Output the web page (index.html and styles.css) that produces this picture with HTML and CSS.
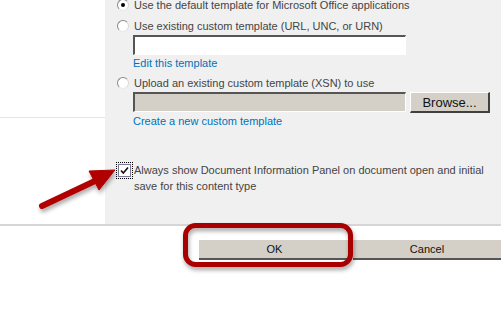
FILE: index.html
```html
<!DOCTYPE html>
<html lang="en">
<head>
    <meta charset="UTF-8">
    <title>Document Information Panel Settings</title>
    <link rel="stylesheet" href="styles.css">
</head>
<body>
    <div class="page">
        <section class="form-section">
            <div class="section-left">
                <div class="section-line"></div>
            </div>
            <div class="section-body">
                <div class="option first">
                    <span class="radio checked"></span>
                    <span>Use the default template for Microsoft Office applications</span>
                </div>
                <div class="option">
                    <span class="radio"></span>
                    <span>Use existing custom template (URL, UNC, or URN)</span>
                </div>
                <div class="field-row">
                    <input type="text" class="text-box">
                </div>
                <a class="link" href="#">Edit this template</a>
                <div class="option">
                    <span class="radio"></span>
                    <span>Upload an existing custom template (XSN) to use</span>
                </div>
                <div class="field-row">
                    <input type="text" class="text-box disabled" disabled>
                    <button class="browse-btn">Browse...</button>
                </div>
                <a class="link" href="#">Create a new custom template</a>

                <div class="check-row">
                    <span class="checkbox">
                        <svg width="11" height="11" viewBox="0 0 11 11">
                            <path d="M2 5.5 L4.3 8 L9 2.5" fill="none" stroke="#111" stroke-width="1.6"/>
                        </svg>
                    </span>
                    <span class="check-label">Always show Document Information Panel on document open and initial save for this content type</span>
                </div>
            </div>
        </section>
        <div class="divider"></div>
        <div class="actions">
            <button class="action-btn ok">OK</button>
            <button class="action-btn cancel">Cancel</button>
        </div>
    </div>

    <!-- annotation overlay -->
    <svg class="annotations" width="501" height="318" viewBox="0 0 501 318">
        <defs>
            <filter id="shadow" x="-20%" y="-20%" width="140%" height="160%">
                <feDropShadow dx="1" dy="3" stdDeviation="2" flood-color="#000" flood-opacity="0.35"/>
            </filter>
        </defs>
        <g filter="url(#shadow)" fill="#b00000" stroke="#b00000">
            <line x1="42" y1="206" x2="96" y2="180.5" stroke-width="6" stroke-linecap="round"/>
            <polygon points="115,170 99,190 89,171" stroke-width="1" stroke-linejoin="round"/>
        </g>
        <rect x="185.5" y="225.5" width="165" height="39" rx="10" ry="10"
              fill="none" stroke="#a80000" stroke-width="5" filter="url(#shadow)"/>
    </svg>
</body>
</html>
```

FILE: styles.css
```css
body {
    margin: 0;
    width: 501px;
    height: 318px;
    overflow: hidden;
    background: #fff;
    font-family: 'Liberation Sans', Arial, sans-serif;
    font-size: 11px;
    color: #444;
    position: relative;
}
.page {
    display: flex;
    flex-direction: column;
}
.form-section {
    display: flex;
    height: 224px;
}
.section-left {
    width: 105px;
    background: #fff;
    padding-top: 117px;
    box-sizing: border-box;
}
.section-line {
    height: 1px;
    background: #e4e4e4;
}
.section-body {
    flex: 1;
    background: #f0f0f0;
    padding-left: 12px;
    overflow: hidden;
}
.option {
    display: flex;
    align-items: center;
    gap: 5px;
    height: 16px;
    margin-top: 5px;
}
.option.first {
    margin-top: -3px;
}
.radio {
    width: 10px;
    height: 10px;
    border-radius: 50%;
    border: 1px solid #8a8a8a;
    border-right-color: #d8d8d8;
    border-bottom-color: #e8e8e8;
    background: #fff;
    position: relative;
    flex-shrink: 0;
}
.radio.checked::after {
    content: "";
    position: absolute;
    left: 3px;
    top: 3px;
    width: 4px;
    height: 4px;
    border-radius: 50%;
    background: #000;
}
.field-row {
    display: flex;
    align-items: flex-start;
    gap: 4px;
    margin-left: 16px;
    margin-top: 1px;
}
.text-box {
    width: 273px;
    height: 20px;
    margin: 0;
    padding: 0;
    box-sizing: border-box;
    border: 2px solid #555;
    border-right: 1px solid #fff;
    border-bottom: 1px solid #fff;
    background: #fff;
}
.text-box.disabled {
    background: #d4d0c8;
}
.browse-btn {
    width: 80px;
    height: 21px;
    margin: 0;
    padding: 0;
    box-sizing: border-box;
    background: #d4d0c8;
    border: 1px solid #fff;
    border-right: 2px solid #404040;
    border-bottom: 2px solid #404040;
    font-family: 'Liberation Sans', Arial, sans-serif;
    font-size: 13px;
    color: #111;
}
.link {
    display: block;
    margin-left: 16px;
    margin-top: 1px;
    line-height: 14px;
    color: #0072bc;
    text-decoration: none;
}
.check-row {
    display: flex;
    align-items: flex-start;
    gap: 3px;
    margin-top: 34px;
    margin-left: -1px;
}
.checkbox {
    width: 13px;
    height: 13px;
    box-sizing: border-box;
    border: 1px solid #7a7a9a;
    background: #fff;
    outline: 1px dotted #000;
    outline-offset: 1px;
    margin-top: 2px;
    margin-left: 2px;
    display: flex;
    align-items: center;
    justify-content: center;
    flex-shrink: 0;
}
.check-label {
    width: 360px;
    line-height: 16px;
}
.divider {
    height: 2px;
    background: #d6d6d6;
}
.actions {
    display: flex;
    gap: 3px;
    padding-top: 14px;
    padding-left: 199px;
}
.action-btn {
    height: 20px;
    margin: 0;
    padding: 0;
    border: none;
    border-bottom: 2px solid #555;
    background: #d4d0c8;
    font-family: 'Liberation Sans', Arial, sans-serif;
    font-size: 11px;
    color: #111;
}
.ok {
    width: 153px;
}
.cancel {
    width: 150px;
}
.annotations {
    position: absolute;
    left: 0;
    top: 0;
    pointer-events: none;
}
```
